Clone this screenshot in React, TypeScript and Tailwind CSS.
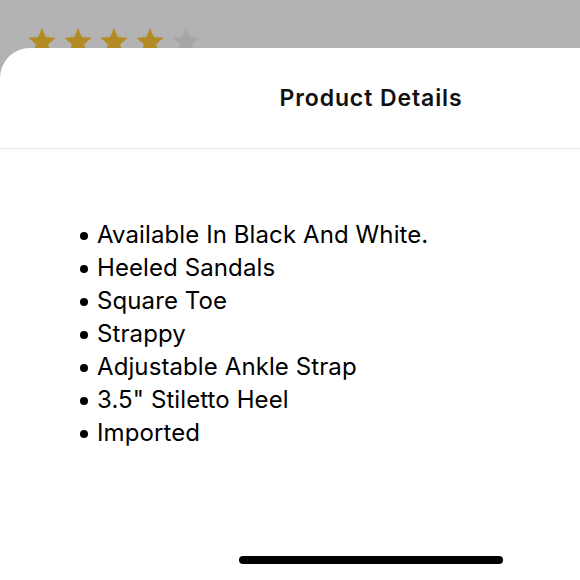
const details = [
  "Available In Black And White.",
  "Heeled Sandals",
  "Square Toe",
  "Strappy",
  "Adjustable Ankle Strap",
  '3.5" Stiletto Heel',
  "Imported",
];

function Star({ filled }: { filled: boolean }) {
  return (
    <svg width="30" height="30" viewBox="0 0 24 24" className="shrink-0">
      <path
        d="M12 1.5l3.1 7.2 7.8.7-5.9 5.1 1.8 7.6L12 18.1 5.2 22.1 7 14.5 1.1 9.4l7.8-.7z"
        fill={filled ? "#b38b25" : "#a6a6a6"}
      />
    </svg>
  );
}

export default function App() {
  return (
    <div className="w-[580px] h-[580px] overflow-hidden bg-[#b3b3b3] flex flex-col">
      {/* rating peeking out from behind the sheet */}
      <div className="h-[48px] shrink-0 overflow-hidden pt-[26px] pl-[27px] flex gap-[6px]">
        {[1, 2, 3, 4, 5].map((n) => (
          <Star key={n} filled={n <= 4} />
        ))}
      </div>

      <div className="w-[742px] grow bg-white rounded-tl-[30px] flex flex-col">
        <div className="h-[101px] shrink-0 border-b border-[#e6e6e6] flex items-center justify-center">
          <h2 className="text-[23px] font-semibold text-[#111] tracking-[0.9px]" style={{ fontFamily: 'Inter, sans-serif' }}>
            Product Details
          </h2>
        </div>

        <ul className="pt-[69px] pl-[80px] flex flex-col" style={{ fontFamily: 'Inter, "Noto Sans", sans-serif' }}>
          {details.map((d) => (
            <li key={d} className="flex items-center h-[33px] text-[24px] tracking-[0.1px] text-black">
              <span className="w-[8px] h-[8px] mt-[2px] rounded-full bg-black mr-[9px]"></span>
              {d}
            </li>
          ))}
        </ul>

        <div className="grow"></div>
        <div className="h-[24px] flex justify-center">
          <div className="w-[264px] h-[8px] rounded-full bg-black"></div>
        </div>
      </div>
    </div>
  );
}
